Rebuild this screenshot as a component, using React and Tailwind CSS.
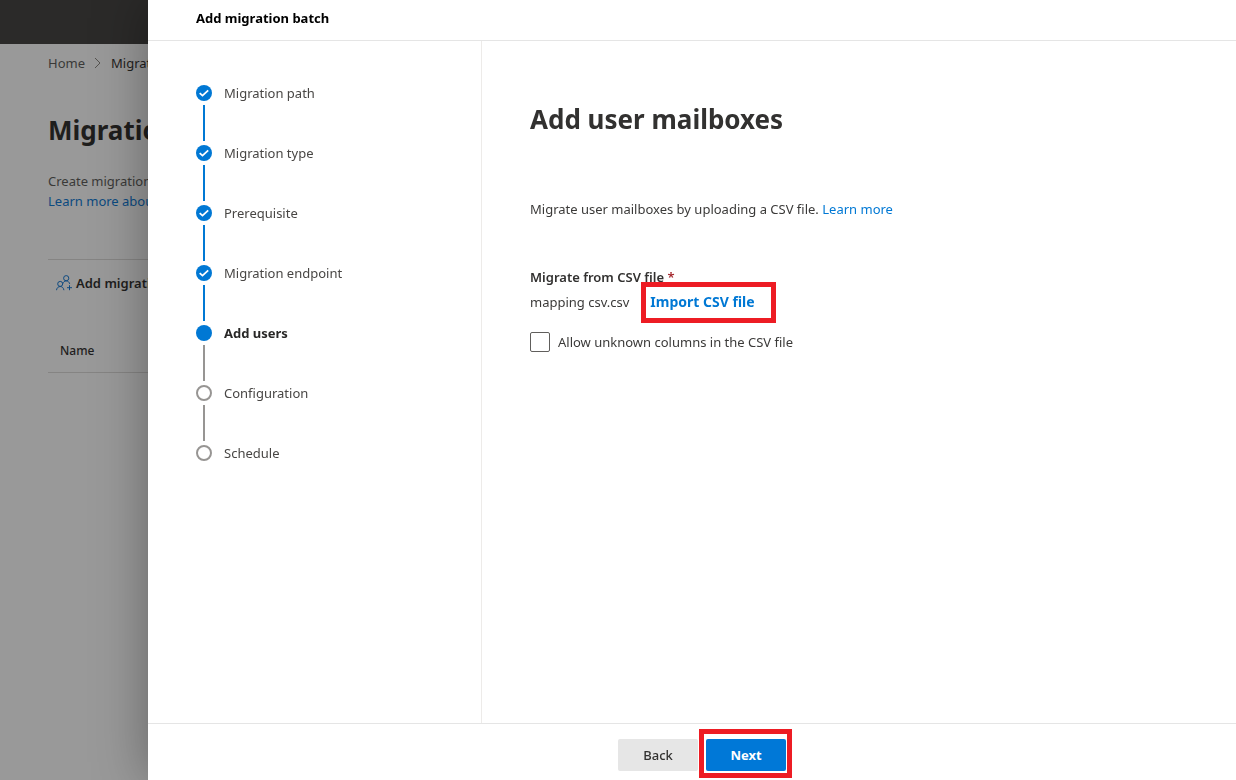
import { useState } from 'react';

const steps = [
  { label: 'Migration path', status: 'done' },
  { label: 'Migration type', status: 'done' },
  { label: 'Prerequisite', status: 'done' },
  { label: 'Migration endpoint', status: 'done' },
  { label: 'Add users', status: 'current' },
  { label: 'Configuration', status: 'todo' },
  { label: 'Schedule', status: 'todo' },
];

function StepIcon({ status }) {
  if (status === 'todo') {
    return <span className="size-4 shrink-0 rounded-full border-2 border-[#979593]" />;
  }
  return (
    <svg viewBox="0 0 16 16" className="size-4 shrink-0" aria-hidden="true">
      <circle cx="8" cy="8" r="8" fill="#0078d4" />
      {status === 'done' && (
        <path d="M3.7 8.1 6.5 10.6 12.2 5.3" fill="none" stroke="#fff" strokeWidth="1.8" />
      )}
    </svg>
  );
}

function Steps() {
  return (
    <ol className="flex flex-col">
      {steps.map((step, i) => (
        <li key={step.label} className="flex flex-col">
          <div className="flex h-4 items-center gap-3">
            <StepIcon status={step.status} />
            <span className={step.status === 'current' ? 'font-bold text-[#292827]' : 'text-[#484644]'}>
              {step.label}
            </span>
          </div>
          {i < steps.length - 1 && (
            <span
              className={
                step.status === 'done'
                  ? 'my-1 ml-[7px] h-9 w-0.5 bg-[#0078d4]'
                  : 'my-1 ml-[7px] h-9 w-0.5 bg-[#979593]'
              }
            />
          )}
        </li>
      ))}
    </ol>
  );
}

function AddPeopleIcon() {
  return (
    <svg viewBox="0 0 16 16" className="size-4 shrink-0" fill="none" stroke="#0f4a80" aria-hidden="true">
      <circle cx="10.2" cy="3.2" r="2.6" />
      <path d="M6.9 8.6C7.4 7 8.6 5.9 10.2 5.9c1.7 0 3.1 1.2 3.5 3" />
      <circle cx="4.2" cy="8.9" r="2.5" />
      <path d="M.5 15.2c.2-2.2 1.8-3.7 3.7-3.7s3.5 1.5 3.7 3.7" />
      <path d="M13.5 10.2v5M11 12.7h5" />
    </svg>
  );
}

// The page behind the panel, dimmed by the overlay
function MigrationPage() {
  return (
    <div className="min-h-screen bg-[#999]">
      <div className="h-11 bg-[#2b2a29]" />
      <div className="ml-12 flex flex-col">
        <nav className="mt-[7px] flex h-6 items-center gap-2 text-[#3a3938]">
          <a href="#home">Home</a>
          <svg viewBox="0 0 10 12" className="h-3 w-2.5" fill="none" stroke="#55534f" aria-hidden="true">
            <path d="M2 1l5 5-5 5" />
          </svg>
          <span className="text-[#1f1e1d]">Migration</span>
        </nav>
        <h1 className="mt-[37px] text-[26px] leading-9 font-bold text-[#1f1e1d]">Migration</h1>
        <p className="mt-[23px] leading-5 text-[#3a3938]">Create migration batches</p>
        <a href="#about" className="leading-5 text-[#0b4a80]">Learn more about migration</a>
        <div className="mt-12 flex h-[46px] items-center border-t border-[#858483] pl-2">
          <button type="button" className="flex items-center gap-1 font-semibold text-[#1f1e1d]">
            <AddPeopleIcon />
            Add migration batch
          </button>
        </div>
        <table className="mt-[26px] w-full text-left text-[12px]">
          <thead>
            <tr className="border-b border-[#858483]">
              <th className="h-[41px] pl-3 font-medium text-[#1f1e1d]">Name</th>
            </tr>
          </thead>
        </table>
      </div>
    </div>
  );
}

export default function App() {
  const [allowUnknown, setAllowUnknown] = useState(false);

  return (
    <div className="h-screen overflow-hidden font-['Noto_Sans','Open_Sans',sans-serif] text-[13px] leading-5">
      <MigrationPage />

      <div
        role="dialog"
        aria-labelledby="panel-title"
        className="fixed inset-y-0 right-0 left-[148px] flex flex-col bg-white shadow-[0_0_50px_rgba(0,0,0,0.35)]"
      >
        <header className="h-[41px] shrink-0 border-b border-[#e5e5e5] pl-12">
          <h2 id="panel-title" className="leading-9 font-bold text-black">Add migration batch</h2>
        </header>

        <div className="flex min-h-0 flex-1">
          <aside className="w-[334px] shrink-0 border-r border-[#edebe9] pt-11 pl-12">
            <Steps />
          </aside>

          <main className="flex flex-1 flex-col items-start pt-15 pl-12 text-[#3b3a39]">
            <h3 className="text-[26px] leading-9 font-bold text-[#323130]">Add user mailboxes</h3>
            <p className="mt-[62px]">
              Migrate user mailboxes by uploading a CSV file.{' '}
              <a href="#learn" className="text-[#0078d4]">Learn more</a>
            </p>

            <p className="mt-12 font-semibold text-[#323130]">
              Migrate from CSV file <span className="text-[#a4262c]">*</span>
            </p>
            <div className="mt-[5px] flex h-6 items-baseline gap-[21px]">
              <span>mapping csv.csv</span>
              <span className="relative">
                <button type="button" className="text-[14px] font-bold text-[#0078d4]">Import CSV file</button>
                <span className="pointer-events-none absolute -top-[10px] -right-[21px] -bottom-[11px] -left-[9px] border-5 border-[#ed1c24]" />
              </span>
            </div>

            <label className="mt-4 flex items-center gap-2">
              <input
                type="checkbox"
                checked={allowUnknown}
                onChange={(e) => setAllowUnknown(e.target.checked)}
                className="size-5 appearance-none rounded-xs border border-[#605e5c] bg-white checked:bg-[#0078d4]"
              />
              Allow unknown columns in the CSV file
            </label>
          </main>
        </div>

        <footer className="flex h-[57px] shrink-0 items-center justify-center gap-2 border-t border-[#e5e5e5] pt-1.5 pl-5">
          <button type="button" className="h-8 w-20 rounded-xs bg-[#e6e6e6] font-medium text-[#323130]">
            Back
          </button>
          <span className="relative">
            <button type="button" className="h-8 w-20 rounded-xs bg-[#0078d7] font-bold text-white">
              Next
            </button>
            <span className="pointer-events-none absolute -top-[10px] -right-[6px] -bottom-[7px] -left-[7px] border-5 border-[#ed1c24]" />
          </span>
        </footer>
      </div>
    </div>
  );
}
